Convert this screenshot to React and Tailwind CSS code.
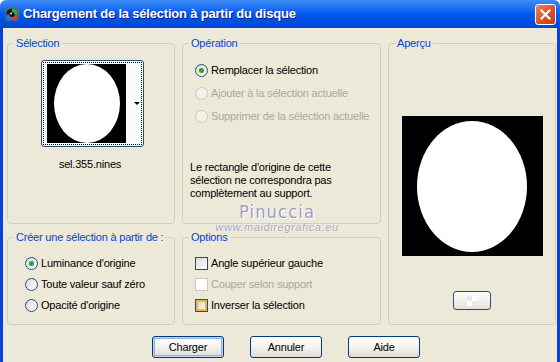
import React from 'react';

function Radio({ checked, disabled }) {
  return (
    <span
      className={
        disabled
          ? 'w-[13px] h-[13px] rounded-full border border-[#cac8bb] bg-[#f2f1ea] shrink-0'
          : 'w-[13px] h-[13px] rounded-full border border-[#1c5180] bg-linear-to-br from-[#dcdcd4] to-white flex items-center justify-center shrink-0'
      }
    >
      {checked && <span className="w-[5px] h-[5px] rounded-full bg-[#2ba42b]" />}
    </span>
  );
}

function Check({ disabled, hover }) {
  if (disabled) {
    return <span className="w-[13px] h-[13px] border border-[#cac8bb] bg-white shrink-0" />;
  }
  return (
    <span className="w-[13px] h-[13px] border border-[#1c5180] bg-linear-to-br from-[#dcdcd4] to-white shrink-0 flex">
      {hover && <span className="flex-1 border-2 border-[#f8b33a] bg-linear-to-br from-[#dcdcd4] to-[#f4f3ee]" />}
    </span>
  );
}

function Group({ label, className, children }) {
  return (
    <div className={`relative border border-[#d0d0bf] rounded-[4px] ${className}`}>
      <span className="absolute -top-[8px] left-[6px] px-[2px] bg-[#ece9d8] text-[#0046d5] leading-[14px]">{label}</span>
      {children}
    </div>
  );
}

function Button({ children, primary }) {
  return (
    <button
      className={`w-[72px] h-[22px] rounded-[3px] border border-[#003c74] bg-linear-to-b from-white via-[#f5f4ef] to-[#dcdcd4] text-black text-[11px] ${primary ? 'shadow-[inset_0_0_0_1px_#c1d3fb,inset_0_0_0_2px_#8eb1f0]' : ''}`}
    >
      {children}
    </button>
  );
}

export default function App() {
  return (
    <div className="w-[560px] h-[362px] flex flex-col font-['Liberation_Sans',Arial,sans-serif] text-[11px] tracking-[-0.2px] text-black overflow-hidden">
      {/* title bar */}
      <div className="h-[28px] shrink-0 flex items-center bg-linear-to-b from-[#3d8cf5] via-[#0058ee] to-[#0046d6] rounded-t-[6px] pl-[4px] pr-[4px]">
        <svg width="16" height="16" viewBox="0 0 16 16" className="shrink-0">
          <rect x="1" y="1" width="14" height="14" rx="3" fill="#4a6f8a" />
          <circle cx="8" cy="8.5" r="6" fill="#1a1a1a" />
          <path d="M8 2.5 A6 6 0 0 1 14 8.5 L8 8.5 Z" fill="#2fb24a" />
          <path d="M14 8.5 A6 6 0 0 1 8 14.5 L8 8.5 Z" fill="#e23a3a" />
          <path d="M8 14.5 A6 6 0 0 1 2 8.5 L8 8.5 Z" fill="#2f6fe0" />
          <circle cx="8" cy="8.5" r="2.5" fill="#111" />
          <circle cx="7" cy="7.5" r="1" fill="#fff" />
        </svg>
        <span className="ml-[3px] text-white font-bold text-[13px] tracking-[-0.2px] [text-shadow:1px_1px_0_#0a1e8c]">
          Chargement de la sélection à partir du disque
        </span>
        <span className="ml-auto w-[21px] h-[21px] rounded-[3px] border border-white bg-linear-to-br from-[#e9865f] via-[#d9542b] to-[#c13e17] flex items-center justify-center">
          <svg width="11" height="11" viewBox="0 0 11 11">
            <path d="M1.5 1.5 L9.5 9.5 M9.5 1.5 L1.5 9.5" stroke="#fff" strokeWidth="2.2" strokeLinecap="square" />
          </svg>
        </span>
      </div>

      {/* body */}
      <div className="relative flex-1 bg-[#ece9d8] border-l-[3px] border-r-[3px] border-[#0842d8] pl-[4px] pr-[2px] pt-[15px]">
        <div className="grid grid-cols-[168px_199px_168px] grid-rows-[181px_88px] gap-x-[7px] gap-y-[13px]">
          <Group label="Sélection" className="flex flex-col">
            <div className="pl-[33px] pt-[16px]">
              <div className="w-[103px] h-[87px] border border-[#1c5180] rounded-[3px] bg-white p-[1px]">
                <div className="h-full border border-dotted border-black flex pl-[3px] py-[1px]">
                  <div className="w-[79px] h-[79px] bg-black flex items-center justify-center">
                    <div className="w-[66px] h-[79px] rounded-[50%] bg-white" />
                  </div>
                  <div className="flex-1 flex items-center justify-end pr-[1px] bg-[#fafafa]">
                    <span className="w-0 h-0 border-l-[3px] border-r-[3px] border-t-[3px] border-l-transparent border-r-transparent border-t-black" />
                  </div>
                </div>
              </div>
            </div>
            <div className="text-center pt-[9px] pr-[2px]">sel.355.nines</div>
          </Group>

          <Group label="Opération" className="flex flex-col pl-[7px]">
            <div className="flex flex-col pt-[15px] pl-[5px]">
              <div className="h-[23px] flex items-center gap-[3px]">
                <Radio checked />
                <span>Remplacer la sélection</span>
              </div>
              <div className="h-[23px] flex items-center gap-[3px] text-[#aca899]">
                <Radio disabled />
                <span>Ajouter à la sélection actuelle</span>
              </div>
              <div className="h-[22px] flex items-center gap-[3px] text-[#aca899]">
                <Radio disabled />
                <span>Supprimer de la sélection actuelle</span>
              </div>
            </div>
            <p className="mt-[34px] leading-[13px]">
              Le rectangle d'origine de cette
              <br />
              sélection ne correspondra pas
              <br />
              complètement au support.
            </p>
          </Group>

          <Group label="Aperçu" className="row-span-2 flex flex-col items-center">
            <div className="mt-[72px] w-[141px] h-[140px] bg-black flex items-center justify-center">
              <div className="w-[110px] h-[131px] rounded-[50%] bg-white" />
            </div>
            <div className="mt-[35px] w-[38px] h-[19px] rounded-[3px] border border-[#1c5180] bg-linear-to-b from-white to-[#e4e3dc] flex items-center justify-center">
              <span className="grid grid-cols-2 w-[10px] h-[10px]">
                <span className="bg-[#e8e8e8]" />
                <span className="bg-white" />
                <span className="bg-white" />
                <span className="bg-[#e8e8e8]" />
              </span>
            </div>
          </Group>

          <Group label="Créer une sélection à partir de :" className="flex flex-col pt-[15px] pl-[17px]">
            <div className="h-[21px] flex items-center gap-[3px]">
              <Radio checked />
              <span>Luminance d'origine</span>
            </div>
            <div className="h-[21px] flex items-center gap-[3px]">
              <Radio />
              <span>Toute valeur sauf zéro</span>
            </div>
            <div className="h-[21px] flex items-center gap-[3px]">
              <Radio />
              <span>Opacité d'origine</span>
            </div>
          </Group>

          <Group label="Options" className="flex flex-col pt-[15px] pl-[12px]">
            <div className="h-[21px] flex items-center gap-[3px]">
              <Check />
              <span>Angle supérieur gauche</span>
            </div>
            <div className="h-[21px] flex items-center gap-[3px] text-[#aca899]">
              <Check disabled />
              <span>Couper selon support</span>
            </div>
            <div className="h-[21px] flex items-center gap-[3px]">
              <Check hover />
              <span>Inverser la sélection</span>
            </div>
          </Group>
        </div>

        <div className="flex gap-[26px] pl-[145px] mt-[11px]">
          <Button primary>Charger</Button>
          <Button>Annuler</Button>
          <Button>Aide</Button>
        </div>

        {/* watermark */}
        <div className="absolute left-[209px] top-[175px] w-[130px] flex flex-col items-center pointer-events-none">
          <span className="text-[18px] leading-[18px] tracking-[1.2px] text-[#9c9cc0] font-['DejaVu_Sans_Condensed','DejaVu_Sans',sans-serif] [text-shadow:0_0_2px_#fff,1px_1px_0_#fff]">
            Pinuccia
          </span>
          <span className="text-[11px] leading-[12px] tracking-[0.6px] italic text-[#a8a8c4] [text-shadow:0_0_2px_#fff]">
            www.maidiregrafica.eu
          </span>
        </div>
      </div>
    </div>
  );
}
